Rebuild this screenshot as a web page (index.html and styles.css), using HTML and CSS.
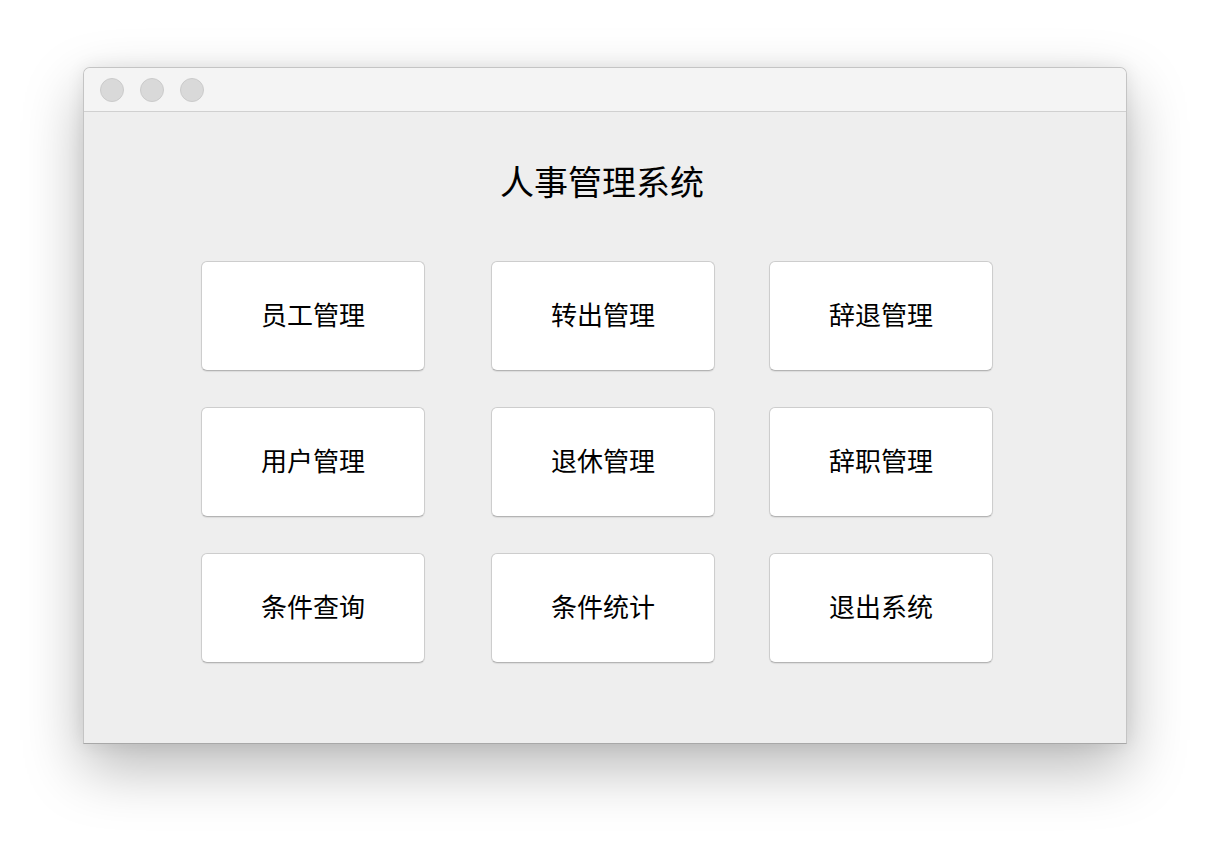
FILE: index.html
```html
<!DOCTYPE html>
<html lang="zh-CN">
<head>
<meta charset="utf-8">
<title>人事管理系统</title>
<link rel="stylesheet" href="styles.css">
</head>
<body>
<div class="window">
  <div class="titlebar">
    <span class="light"></span>
    <span class="light"></span>
    <span class="light"></span>
  </div>
  <div class="content">
    <h1 class="title">人事管理系统</h1>
    <div class="grid">
      <button class="btn">员工管理</button>
      <button class="btn">转出管理</button>
      <button class="btn">辞退管理</button>
      <button class="btn">用户管理</button>
      <button class="btn">退休管理</button>
      <button class="btn">辞职管理</button>
      <button class="btn">条件查询</button>
      <button class="btn">条件统计</button>
      <button class="btn">退出系统</button>
    </div>
  </div>
</div>
</body>
</html>
```
FILE: styles.css
```css
html, body {
  margin: 0;
  padding: 0;
  background: #ffffff;
  width: 1210px;
  height: 844px;
  overflow: hidden;
}
body {
  font-family: "Noto Sans CJK SC", "Noto Sans", sans-serif;
  color: #000;
  padding-top: 67px;
  padding-left: 83px;
  box-sizing: border-box;
}
.window {
  width: 1044px;
  height: 677px;
  box-sizing: border-box;
  border: 1px solid #c4c4c4;
  border-bottom-color: #a8a8a8;
  border-radius: 7px 7px 0 0;
  background: #eeeeee;
  box-shadow: 0 24px 60px rgba(0, 0, 0, 0.28), 0 0 18px rgba(0, 0, 0, 0.08);
  display: flex;
  flex-direction: column;
  overflow: hidden;
}
.titlebar {
  flex: none;
  height: 44px;
  background: #f4f4f4;
  border-bottom: 1px solid #d0d0d0;
  display: flex;
  align-items: center;
  padding-left: 16px;
  gap: 16px;
  box-sizing: border-box;
}
.light {
  width: 24px;
  height: 24px;
  border-radius: 50%;
  background: #d9d9d9;
  box-sizing: border-box;
  border: 1px solid #cbcbcb;
}
.content {
  flex: 1;
  display: flex;
  flex-direction: column;
  align-items: flex-start;
}
.title {
  align-self: center;
  margin: 46px 0 0 0;
  font-size: 34px;
  font-weight: 400;
  line-height: 46px;
  height: 46px;
  padding-right: 6px;
}
.grid {
  margin-top: 57px;
  margin-left: 117px;
  display: grid;
  grid-template-columns: 290px 278px 224px;
  grid-auto-rows: 110px;
  row-gap: 36px;
}
.btn {
  width: 224px;
  height: 110px;
  background: #ffffff;
  border: 1px solid #cdcdcd;
  border-bottom-color: #b4b4b4;
  border-radius: 6px;
  box-shadow: 0 1px 1px rgba(0, 0, 0, 0.08);
  font-family: "Noto Sans CJK SC", "Noto Sans", sans-serif;
  font-size: 26px;
  color: #000;
  padding: 0 0 6px 0;
  margin: 0;
}
```
